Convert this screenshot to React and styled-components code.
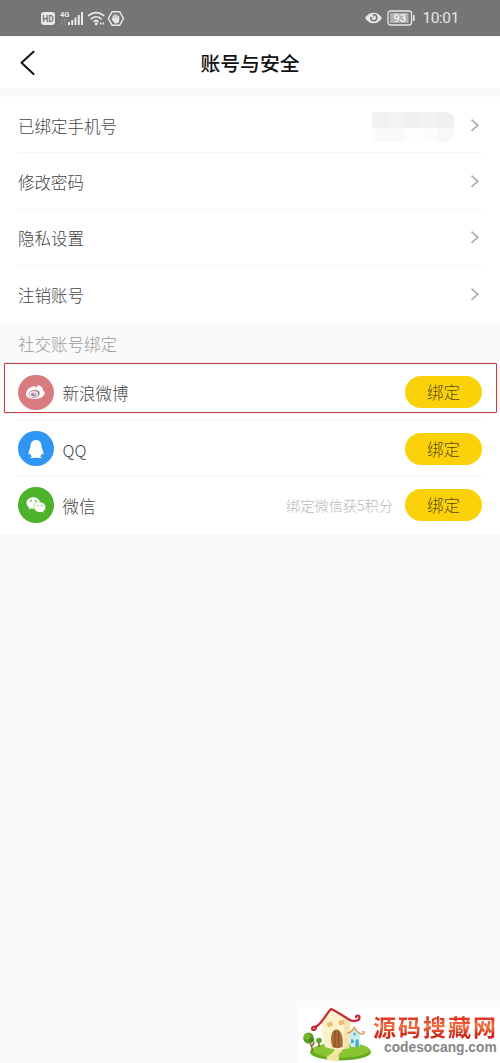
import React from 'react';
import styled, { createGlobalStyle } from 'styled-components';
import { FaQq, FaWeixin } from 'react-icons/fa';

const GlobalStyle = createGlobalStyle`
  * {
    box-sizing: border-box;
  }

  body {
    margin: 0;
    background: #fafafa;
    font-family: 'Noto Sans CJK SC', sans-serif;
  }
`;

const Screen = styled.div`
  display: flex;
  flex-direction: column;
  width: 500px;
  height: 1063px;
  overflow: hidden;
  background: #fafafa;
`;

const StatusBar = styled.div`
  display: flex;
  align-items: center;
  justify-content: space-between;
  flex: none;
  height: 36px;
  padding: 0 41px 0 40px;
  background: #757575;
`;

const StatusGroup = styled.div`
  display: flex;
  align-items: center;
  gap: ${(props) => props.$gap || 0}px;
`;

const Clock = styled.span`
  margin-left: 2px;
  color: #e6e6e6;
  font-family: Roboto, sans-serif;
  font-size: 15.5px;
  font-weight: 400;
  line-height: 36px;
  letter-spacing: -0.4px;
`;

const Header = styled.header`
  display: grid;
  grid-template-columns: 60px 1fr 60px;
  align-items: center;
  flex: none;
  height: 52px;
  border-top: 1px solid #f6f6f6;
  background: #fff;
`;

const BackButton = styled.button`
  display: flex;
  padding: 0 0 0 18px;
  border: 0;
  background: none;
`;

const Title = styled.h1`
  margin: 0;
  color: #111;
  font-size: 19.8px;
  font-weight: 500;
  line-height: 28px;
  text-align: center;
`;

const List = styled.section`
  flex: none;
  margin-top: ${(props) => props.$top || 0}px;
  background: #fff;
`;

const Row = styled.div`
  display: flex;
  align-items: center;
  height: 56.4px;
  margin: 0 18px;
  border-bottom: 1px solid ${(props) => (props.$last ? 'transparent' : '#f6f6f6')};
`;

const Label = styled.span`
  flex: 1;
  padding-top: 2px;
  color: #444;
  font-size: 16.5px;
  font-weight: 300;
  line-height: 24px;
`;

const SectionTitle = styled.h2`
  flex: none;
  height: 42px;
  margin: 0;
  padding-left: 18px;
  color: #999;
  font-size: 16.5px;
  font-weight: 300;
  line-height: 43px;
`;

const MaskedPhone = styled.div`
  display: grid;
  grid-template-columns: repeat(5, 1fr);
  grid-template-rows: 16px 14px;
  width: 82px;
  margin: 5px 15px 0 0;
  border-radius: 2px 8px 8px 2px;
  overflow: hidden;
`;

const MaskCell = styled.span`
  background: ${(props) => props.$tone};
`;

const Avatar = styled.span`
  display: flex;
  align-items: center;
  justify-content: center;
  width: 35.5px;
  height: 35.5px;
  margin-right: 9px;
  border-radius: 50%;
  background: ${(props) => props.$color};
  color: #fff;
`;

const Hint = styled.span`
  margin-right: 12px;
  color: #b8b8b8;
  font-size: 14.2px;
  font-weight: 300;
  line-height: 20px;
`;

const BindButton = styled.button`
  width: 77px;
  height: 32px;
  padding: 0;
  border: 0;
  border-radius: 16px;
  background: #fbd209;
  color: #5e4c12;
  font-family: inherit;
  font-size: 16.5px;
  font-weight: 300;
  line-height: 33px;
`;

const SocialList = styled(List)`
  position: relative;
`;

const Highlight = styled.div`
  position: absolute;
  top: -1.6px;
  left: 4px;
  width: 493px;
  height: 50px;
  border: 1px solid #c5413f;
  border-radius: 1px;
  box-shadow: 0 0 1px #c5413f;
  pointer-events: none;
`;

const Watermark = styled.footer`
  display: flex;
  align-self: flex-end;
  flex: none;
  width: 201px;
  height: 56px;
  margin-top: auto;
  background: #fff;
`;

const SiteName = styled.div`
  padding-top: 6px;
`;

const SiteTitle = styled.div`
  background: linear-gradient(#e03424 20%, #f27645 48%, #d3281c 80%);
  background-clip: text;
  color: transparent;
  font-size: 23px;
  font-weight: 700;
  line-height: 27px;
  letter-spacing: 2px;
  white-space: nowrap;
`;

const SiteUrl = styled.div`
  margin-left: 11px;
  color: #858585;
  font-family: 'Liberation Sans', Arial, sans-serif;
  font-size: 13.8px;
  font-weight: 700;
  line-height: 16px;
`;

const SignalIcons = () => (
  <svg width='86' height='20' viewBox='0 0 86 20' fill='#e8e8e8'>
    <rect x='1' y='4' width='14' height='13' rx='3' />
    <text x='8' y='13.6' fill='#757575' fontFamily='Roboto, sans-serif' fontSize='8.5' fontWeight='700' textAnchor='middle'>
      HD
    </text>
    <text x='20' y='9' fontFamily='Roboto, sans-serif' fontSize='7.5' fontWeight='700'>
      4G
    </text>
    <path d='M22 11v6m-1.5-1.5L22 17M25 17v-6l1.5 1.5' fill='none' stroke='#929292' />
    <path d='M28 14h2v3h-2zM31.2 12h2v5h-2zM34.5 9.5h2V17h-2zM37.8 7h2v10h-2zM41 4h2v13h-2z' />
    <path
      d='M48.5 7.600c4.600-4 10.700-4 15.300 0M51.200 10.800c3-2.700 7-2.700 10 0M54 13.500c1.300-1.200 3-1.200 4.300 0'
      fill='none'
      stroke='#e8e8e8'
      strokeWidth='1.700'
      strokeLinecap='round'
    />
    <circle cx='56.200' cy='15.800' r='1.500' />
    <path d='M60 15.500h1.600m1 0h1.500' stroke='#e8e8e8' strokeWidth='2' />
    <path d='M72.200 3.700h7.400l3.900 6.800-3.900 6.800h-7.400l-3.900-6.800z' fill='none' stroke='#e8e8e8' strokeWidth='1.500' strokeLinejoin='round' />
    <path d='M73.200 11V8m1.800 3V6.800m1.800 4.200V7.200m1.700 4V8.500' stroke='#e8e8e8' strokeWidth='1.400' strokeLinecap='round' />
    <path d='M72.500 10.300h6.700v2.200c0 3.500-4.300 3.700-5.600 1.400l-2.200-3z' />
  </svg>
);

const EyeIcon = () => (
  <svg width='19' height='14' viewBox='0 0 19 14'>
    <path d='M1 7c4.300-7 12.700-7 17 0-4.300 7-12.700 7-17 0z' fill='#e8e8e8' />
    <circle cx='9.800' cy='6.800' r='3.800' fill='#757575' />
    <path d='M9.800 4.600a2.200 2.200 0 1 1-2.200 2.200c1.200.1 2.200-.8 2.200-2.200z' fill='#e8e8e8' />
    <circle cx='7.600' cy='4.700' r='1.600' fill='#e8e8e8' />
  </svg>
);

const BatteryIcon = () => (
  <svg width='29' height='16' viewBox='0 0 29 16'>
    <rect x='1' y='1' width='23.500' height='14' rx='2.500' fill='none' stroke='#e8e8e8' strokeWidth='1.300' />
    <rect x='3' y='3' width='18.500' height='10' fill='#b0b0b0' />
    <text x='12.800' y='12.200' fill='#f0f0f0' fontFamily='Roboto, sans-serif' fontSize='11.500' fontWeight='500' textAnchor='middle'>
      93
    </text>
    <path d='M26 5h1.600v6H26z' fill='#e8e8e8' />
  </svg>
);

const BackIcon = () => (
  <svg width='18' height='26' viewBox='0 0 18 26' fill='none' stroke='#111' strokeWidth='2' strokeLinecap='round' strokeLinejoin='round'>
    <path d='M15.500 1.800L3.500 12.800l12 11.200' />
  </svg>
);

const Chevron = () => (
  <svg width='13' height='14' viewBox='0 0 13 14' fill='none' stroke='#aaa' strokeWidth='1.600'>
    <path d='M2.500 1.700L8.800 7.300l-6.300 5.500' />
  </svg>
);

const WeiboIcon = () => (
  <svg width='21' height='18' viewBox='0 0 21 18'>
    <path
      d='M1 11.200C.8 7.500 5.500 3.200 8.800 3.200c1.400 0 1.800.7 1.700 1.700.9-.6 1.400-2.500 3.200-2.700 1.200-.1 1.800.7 2.500 1.500 1.300.2 1.600 1.300 1.500 2.500.1 1 .2 1.500 1 1.800.9.500 1.200 1.400.9 2.500-.9 3.300-5 5.500-9.600 5.500-5 0-8.900-1.800-9-4.800z'
      fill='#fff'
    />
    <ellipse cx='9.200' cy='10.800' rx='5.800' ry='3.900' fill='#bf8799' transform='rotate(-10 9.200 10.800)' />
    <ellipse cx='8.600' cy='11.200' rx='4.300' ry='2.900' fill='#fff' transform='rotate(-10 8.600 11.200)' />
    <ellipse cx='8.600' cy='11.500' rx='2.800' ry='1.900' fill='#a583a3' />
    <circle cx='9.500' cy='11' r='.8' fill='#fff' />
  </svg>
);

const HouseLogo = () => (
  <svg width='74' height='56' viewBox='0 0 74 56'>
    <ellipse cx='41.500' cy='45' rx='30.500' ry='8.500' fill='#64aa22' />
    <ellipse cx='42' cy='43' rx='29' ry='7.500' fill='#8ac433' />
    <path d='M36 40c0 4-3 7-8 9.500-1 2 0 3.500 3 4h8c3-2-1-4 1-6.500 2-2 4-3 4-7z' fill='#f3e4a0' />
    <path d='M32 3L22 17l4 23c7 3 16 3 24 1l2-26z' fill='#fcf1c8' />
    <path d='M45 12l6 2-1 27-5 1z' fill='#f6e2ae' />
    <path
      d='M17 20.500c0 3-4.500 3.500-4 .5.500-2 3-1 5-2C23 16.500 27 7 32 2c6 2.500 12 7 18 10.500 4 2.500 10 1.500 10.500-1.500.3-3-3.500-3-3.500-.8'
      fill='none'
      stroke='#c52a37'
      strokeWidth='2.200'
      strokeLinecap='round'
      strokeLinejoin='round'
    />
    <path d='M33.500 40c-3-9-1-17.500 3.800-17.500s7.500 8 6.200 17.500c-3 1.500-7 1.500-10 0z' fill='#a96a35' />
    <path d='M36 24v16.500m3.500-17V41' stroke='#834b21' strokeWidth='.8' />
    <path d='M28.500 16.500l4-1.500.7 3.500-4.200 1zM40 14l4.500-.5.500 3.500-4.500.5z' fill='#f0c07b' stroke='#e2a45c' strokeWidth='.6' />
    <path d='M50.500 27l5-6 5.500 6-.5 13h-9z' fill='#c9edf3' />
    <path d='M49 26c3-.5 5-3 6.500-5.500 1.500 3 4 6 7.500 6.500 2.500.3 3-2.500 1-2.500' fill='none' stroke='#dc9a54' strokeWidth='1.500' strokeLinecap='round' />
    <path d='M56.500 40v-6c.5-2.500 3-2.500 3.200 0v6zM52 32.500h2.700v3.500H52z' fill='#4ba5bd' />
    <circle cx='55.500' cy='27' r='1.500' fill='#61b5c8' />
    <path d='M13.500 44c0-4-1.500-6-3.500-10m3 5l2.500-4M20 40v-6' fill='none' stroke='#8b6932' strokeWidth='1.500' />
    <ellipse cx='9.500' cy='31' rx='5.300' ry='5.500' fill='#58a126' />
    <circle cx='8' cy='29.500' r='3' fill='#74b634' />
    <circle cx='12.500' cy='33' r='2.500' fill='#438b1d' />
    <circle cx='20' cy='33.500' r='2.800' fill='#5ba522' />
  </svg>
);

const maskTones = [
  '#f1f1f1', '#f3f3f3', '#f0f0f0', '#f2f2f2', '#efefef',
  '#fafafa', '#f9f9f9', '#fdfdfd', '#fcfcfc', '#f8f8f8',
];

const settings = ['已绑定手机号', '修改密码', '隐私设置', '注销账号'];

const accounts = [
  { name: '新浪微博', color: '#d87b80', icon: <WeiboIcon /> },
  { name: 'QQ', color: '#3096f4', icon: <FaQq size={18} /> },
  { name: '微信', color: '#4db22c', icon: <FaWeixin size={20} />, hint: '绑定微信获5积分' },
];

const App = () => (
  <>
    <GlobalStyle />
    <Screen>
      <StatusBar>
        <StatusGroup>
          <SignalIcons />
        </StatusGroup>
        <StatusGroup $gap={4}>
          <EyeIcon />
          <BatteryIcon />
          <Clock>10:01</Clock>
        </StatusGroup>
      </StatusBar>
      <Header>
        <BackButton aria-label='返回'>
          <BackIcon />
        </BackButton>
        <Title>账号与安全</Title>
      </Header>
      <List $top={9}>
        {settings.map((label, index) => (
          <Row key={label} $last={index === settings.length - 1}>
            <Label>{label}</Label>
            {index === 0 && (
              <MaskedPhone>
                {maskTones.map((tone) => (
                  <MaskCell key={tone} $tone={tone} />
                ))}
              </MaskedPhone>
            )}
            <Chevron />
          </Row>
        ))}
      </List>
      <SectionTitle>社交账号绑定</SectionTitle>
      <SocialList>
        {accounts.map(({ name, color, icon, hint }, index) => (
          <Row key={name} $last={index === accounts.length - 1}>
            <Avatar $color={color}>{icon}</Avatar>
            <Label>{name}</Label>
            {hint && <Hint>{hint}</Hint>}
            <BindButton>绑定</BindButton>
          </Row>
        ))}
        <Highlight />
      </SocialList>
      <Watermark>
        <HouseLogo />
        <SiteName>
          <SiteTitle>源码搜藏网</SiteTitle>
          <SiteUrl>codesocang.com</SiteUrl>
        </SiteName>
      </Watermark>
    </Screen>
  </>
);

export default App;
